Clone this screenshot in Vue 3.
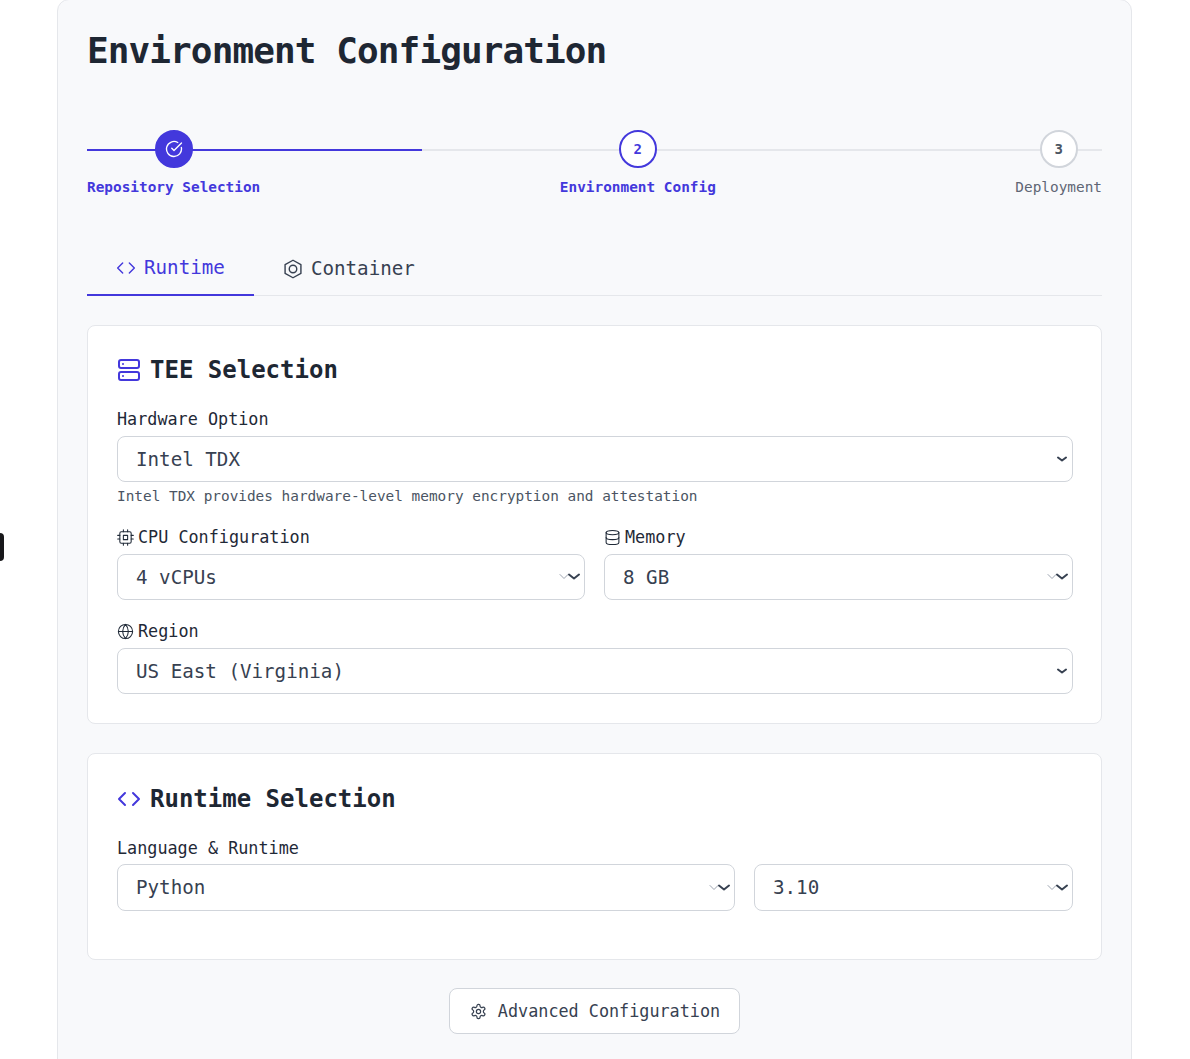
<template>
  <div class="page">
    <div class="edge-tab"></div>
    <div class="panel">
      <h1 class="title">Environment Configuration</h1>

      <div class="stepper">
        <div class="step-line"><div class="step-progress"></div></div>
        <div v-for="step in steps" :key="step.label" class="step" :class="step.state">
          <div class="step-dot">
            <svg v-if="step.state === 'done'" viewBox="0 0 24 24" class="step-check">
              <path d="M21.8 10A10 10 0 1 1 17 3.3" />
              <path d="m9 11 3 3L22 4" />
            </svg>
            <template v-else>{{ step.num }}</template>
          </div>
          <div class="step-label">{{ step.label }}</div>
        </div>
      </div>

      <div class="tabs">
        <div class="tab active">
          <svg viewBox="0 0 24 24" class="tab-icon">
            <polyline points="16 18 22 12 16 6" />
            <polyline points="8 6 2 12 8 18" />
          </svg>
          Runtime
        </div>
        <div class="tab">
          <svg viewBox="0 0 24 24" class="tab-icon hex">
            <path d="M12 1.5l9.5 5.25v10.5L12 22.5l-9.5-5.25V6.75z" />
            <circle cx="12" cy="12" r="4.5" />
          </svg>
          Container
        </div>
      </div>

      <section class="card tee-card">
        <h2 class="card-title">
          <svg viewBox="0 0 24 24" class="title-icon">
            <rect x="2" y="2" width="20" height="8" rx="2" />
            <rect x="2" y="14" width="20" height="8" rx="2" />
            <line x1="6" y1="6" x2="6.01" y2="6" />
            <line x1="6" y1="18" x2="6.01" y2="18" />
          </svg>
          TEE Selection
        </h2>

        <div class="field">
          <label class="label">Hardware Option</label>
          <div class="select native">Intel TDX
            <svg viewBox="0 0 12 12" class="arrow-bold"><path d="M2 4.5l4 3 4-3" /></svg>
          </div>
          <p class="hint">Intel TDX provides hardware-level memory encryption and attestation</p>
        </div>

        <div class="two-col">
          <div class="field">
            <label class="label">
              <svg viewBox="0 0 24 24" class="label-icon">
                <rect x="4" y="4" width="16" height="16" rx="2" />
                <rect x="9" y="9" width="6" height="6" />
                <path d="M9 1v3M15 1v3M9 20v3M15 20v3M20 9h3M20 14h3M1 9h3M1 14h3" />
              </svg>
              CPU Configuration
            </label>
            <div class="select">4 vCPUs
              <svg viewBox="0 0 24 12" class="arrow-double"><path class="thin" d="M1 3.5l4 4 4-4" /><path class="thick" d="M10 3.5l5 4 5-4" /></svg>
            </div>
          </div>
          <div class="field">
            <label class="label">
              <svg viewBox="0 0 24 24" class="label-icon">
                <ellipse cx="12" cy="5" rx="9" ry="3" />
                <path d="M3 5v14a9 3 0 0 0 18 0V5" />
                <path d="M3 12a9 3 0 0 0 18 0" />
              </svg>
              Memory
            </label>
            <div class="select">8 GB
              <svg viewBox="0 0 24 12" class="arrow-double"><path class="thin" d="M1 3.5l4 4 4-4" /><path class="thick" d="M10 3.5l5 4 5-4" /></svg>
            </div>
          </div>
        </div>

        <div class="field last">
          <label class="label">
            <svg viewBox="0 0 24 24" class="label-icon">
              <circle cx="12" cy="12" r="10" />
              <path d="M2 12h20" />
              <path d="M12 2a15.3 15.3 0 0 1 4 10 15.3 15.3 0 0 1-4 10 15.3 15.3 0 0 1-4-10 15.3 15.3 0 0 1 4-10z" />
            </svg>
            Region
          </label>
          <div class="select native">US East (Virginia)
            <svg viewBox="0 0 12 12" class="arrow-bold"><path d="M2 4.5l4 3 4-3" /></svg>
          </div>
        </div>
      </section>

      <section class="card runtime-card">
        <h2 class="card-title">
          <svg viewBox="0 0 24 24" class="title-icon">
            <polyline points="16 18 22 12 16 6" />
            <polyline points="8 6 2 12 8 18" />
          </svg>
          Runtime Selection
        </h2>
        <label class="label">Language &amp; Runtime</label>
        <div class="runtime-row">
          <div class="select tall">Python
            <svg viewBox="0 0 24 12" class="arrow-double"><path class="thin" d="M1 3.5l4 4 4-4" /><path class="thick" d="M10 3.5l5 4 5-4" /></svg>
          </div>
          <div class="select tall">3.10
            <svg viewBox="0 0 24 12" class="arrow-double"><path class="thin" d="M1 3.5l4 4 4-4" /><path class="thick" d="M10 3.5l5 4 5-4" /></svg>
          </div>
        </div>
      </section>

      <div class="actions">
        <button class="advanced-btn">
          <svg viewBox="0 0 24 24" class="btn-icon">
            <path d="M12.22 2h-.44a2 2 0 0 0-2 2v.18a2 2 0 0 1-1 1.73l-.43.25a2 2 0 0 1-2 0l-.15-.08a2 2 0 0 0-2.73.73l-.22.38a2 2 0 0 0 .73 2.73l.15.1a2 2 0 0 1 1 1.72v.51a2 2 0 0 1-1 1.74l-.15.09a2 2 0 0 0-.73 2.73l.22.38a2 2 0 0 0 2.73.73l.15-.08a2 2 0 0 1 2 0l.43.25a2 2 0 0 1 1 1.73V20a2 2 0 0 0 2 2h.44a2 2 0 0 0 2-2v-.18a2 2 0 0 1 1-1.73l.43-.25a2 2 0 0 1 2 0l.15.08a2 2 0 0 0 2.73-.73l.22-.39a2 2 0 0 0-.73-2.73l-.15-.08a2 2 0 0 1-1-1.74v-.5a2 2 0 0 1 1-1.74l.15-.09a2 2 0 0 0 .73-2.73l-.22-.38a2 2 0 0 0-2.73-.73l-.15.08a2 2 0 0 1-2 0l-.43-.25a2 2 0 0 1-1-1.73V4a2 2 0 0 0-2-2z" />
            <circle cx="12" cy="12" r="3" />
          </svg>
          Advanced Configuration
        </button>
      </div>
    </div>
  </div>
</template>

<script setup>
const steps = [
  { num: 1, label: 'Repository Selection', state: 'done' },
  { num: 2, label: 'Environment Config', state: 'current' },
  { num: 3, label: 'Deployment', state: 'todo' }
]
</script>

<style>
html, body {
  margin: 0;
  background: #fff;
  overflow: hidden;
}
</style>

<style scoped>
.page {
  position: relative;
  height: 1059px;
  overflow: hidden;
  font-family: "DejaVu Sans Mono", monospace;
  color: #374151;
}

svg {
  fill: none;
  stroke: currentColor;
  stroke-width: 2;
  stroke-linecap: round;
  stroke-linejoin: round;
  flex: none;
}

.edge-tab {
  position: absolute;
  left: -8px;
  top: 533px;
  width: 12px;
  height: 28px;
  background: #18181b;
  border-radius: 4px;
}

.panel {
  width: 1015px;
  margin: -1px 0 0 57px;
  padding: 31px 29px 60px;
  background: #f8f9fb;
  border: 1px solid #e5e7eb;
  border-radius: 12px;
}

.title {
  margin: 0;
  font-size: 36px;
  line-height: 40px;
  font-weight: 700;
  letter-spacing: -0.9px;
  color: #1e2733;
}

.stepper {
  position: relative;
  display: flex;
  justify-content: space-between;
  margin-top: 59px;
}

.step-line {
  position: absolute;
  left: 0;
  right: 0;
  top: 19px;
  height: 2px;
  background: #e5e7eb;
}

.step-progress {
  width: 33%;
  height: 100%;
  background: #4338dc;
}

.step {
  position: relative;
  display: flex;
  flex-direction: column;
  align-items: center;
  gap: 9px;
}

.step-dot {
  width: 34px;
  height: 34px;
  border: 2px solid #d1d5db;
  border-radius: 50%;
  background: #fff;
  display: flex;
  align-items: center;
  justify-content: center;
  font-size: 14px;
  font-weight: 700;
  color: #4b5563;
}

.step.done .step-dot {
  background: #4338dc;
  border-color: #4338dc;
  color: #fff;
}

.step.current .step-dot {
  border-color: #4338dc;
  color: #4338dc;
}

.step-check {
  width: 18px;
  height: 18px;
  stroke-width: 1.8;
}

.step-label {
  font-size: 14.4px;
  line-height: 20px;
  color: #5f6675;
  white-space: nowrap;
}

.step.done .step-label,
.step.current .step-label {
  color: #4338dc;
  font-weight: 700;
}

.tabs {
  display: flex;
  margin-top: 45px;
  border-bottom: 1px solid #e5e7eb;
}

.tab {
  display: flex;
  align-items: center;
  gap: 8px;
  height: 50px;
  padding: 1px 29px 2px;
  font-size: 19.2px;
  color: #374151;
}

.tab.active {
  color: #4338dc;
  border-bottom: 2px solid #4338dc;
  margin-bottom: -1px;
  height: 49px;
}

.tab-icon {
  width: 20px;
  height: 20px;
  stroke-width: 1.7;
}

.tab-icon.hex {
  margin-top: 2px;
}

.card {
  margin-top: 29px;
  padding: 29px 28px 29px 29px;
  background: #fff;
  border: 1px solid #e5e7eb;
  border-radius: 8px;
}

.runtime-card {
  padding-bottom: 48px;
}

.card-title {
  display: flex;
  align-items: center;
  gap: 9px;
  margin: 0 0 21px;
  font-size: 24px;
  line-height: 32px;
  font-weight: 700;
  color: #1e2733;
}

.tee-card .card-title {
  margin-top: -1px;
}

.title-icon {
  width: 24px;
  height: 24px;
  color: #4338dc;
}

.field {
  margin-bottom: 19px;
}

.field.last {
  margin-bottom: 0;
}

.label {
  display: flex;
  align-items: center;
  gap: 4px;
  margin-bottom: 5px;
  font-size: 16.8px;
  line-height: 24px;
  color: #1f2937;
}

.runtime-card .label {
  margin-bottom: 4px;
}

.label-icon {
  width: 17px;
  height: 17px;
  stroke-width: 1.5;
}

.select {
  position: relative;
  box-sizing: border-box;
  height: 46px;
  padding: 0 18px;
  display: flex;
  align-items: center;
  background: #fff;
  border: 1px solid #d1d5db;
  border-radius: 8px;
  font-size: 19.2px;
  color: #374151;
}

.select.tall {
  height: 47px;
}

.arrow-bold {
  position: absolute;
  right: 4px;
  top: 50%;
  width: 12px;
  height: 12px;
  margin-top: -6px;
  color: #374151;
}

.arrow-double {
  position: absolute;
  right: 1px;
  top: 50%;
  width: 24px;
  height: 12px;
  margin-top: -6px;
}

.arrow-double .thin {
  stroke: #9ca3af;
  stroke-width: 1;
}

.arrow-double .thick {
  stroke: #374151;
  stroke-width: 2;
}

.hint {
  margin: 4px 0 0;
  font-size: 14.4px;
  line-height: 20px;
  color: #4b5563;
}

.two-col {
  display: grid;
  grid-template-columns: 468px 1fr;
  column-gap: 19px;
}

.runtime-row {
  display: grid;
  grid-template-columns: 618px 1fr;
  column-gap: 19px;
}

.actions {
  display: flex;
  justify-content: center;
  margin-top: 28px;
}

.advanced-btn {
  display: flex;
  align-items: center;
  gap: 11px;
  height: 46px;
  padding: 0 19px 0 20px;
  background: #fff;
  border: 1px solid #d1d5db;
  border-radius: 8px;
  font-family: inherit;
  font-size: 16.8px;
  color: #374151;
}

.btn-icon {
  width: 17px;
  height: 17px;
  stroke-width: 1.7;
}
</style>
